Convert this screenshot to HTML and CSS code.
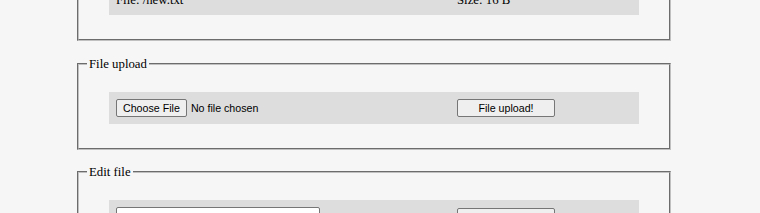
FILE: index.html
```html
<!DOCTYPE html>
<html lang="en">
<head>
    <meta charset="UTF-8">
    <meta name="viewport" content="width=device-width, initial-scale=1.0">
    <title>File manager</title>
    <link rel="stylesheet" href="styles.css">
</head>
<body>
    <div class="page">
        <fieldset class="panel">
            <legend>File info</legend>
            <div class="panel-row">
                <span>File: /new.txt</span>
                <span>Size: 16 B</span>
            </div>
        </fieldset>

        <fieldset class="panel">
            <legend>File upload</legend>
            <form class="panel-row" onsubmit="return false">
                <input type="file" class="file-pick">
                <input type="submit" class="btn" value="File upload!">
            </form>
        </fieldset>

        <fieldset class="panel">
            <legend>Edit file</legend>
            <form class="panel-row" onsubmit="return false">
                <input type="text" class="text-field" placeholder="Select file to edit">
                <input type="submit" class="btn" value="Edit">
            </form>
        </fieldset>
    </div>
</body>
</html>
```

FILE: styles.css
```css
html {
    background: #f6f6f6;
}

body {
    margin: 0;
    background: #f6f6f6;
    font-family: 'Liberation Serif', 'Times New Roman', serif;
    font-size: 12.8px;
    color: #000;
}

.page {
    width: 594px;
    margin: -50px 0 0 77px;
}

.panel {
    box-sizing: border-box;
    width: 100%;
    min-width: 0;
    margin: 0 0 14.5px;
    padding: 0 8px;
    border: 2px groove #c0c0c0;
}

.panel legend {
    padding: 0 2px;
    line-height: 16px;
}

.panel-row {
    display: grid;
    grid-template-columns: 341px 1fr;
    align-items: center;
    margin: 20px 22px 24px;
    padding: 7px;
    background: #dddddd;
}

.file-pick,
.btn,
.text-field {
    font-family: 'Liberation Sans', Arial, sans-serif;
    font-size: 10.67px;
    color: #000;
}

.file-pick {
    height: 18px;
}

.file-pick::file-selector-button {
    box-sizing: border-box;
    height: 18px;
    padding: 0 6px;
    margin-right: 4px;
    font-family: 'Liberation Sans', Arial, sans-serif;
    font-size: 10.67px;
    background: #efefef;
    border: 1px solid #767676;
    border-radius: 2px;
}

.btn {
    box-sizing: border-box;
    width: 98px;
    height: 18px;
    padding: 0 6px;
    background: #efefef;
    border: 1px solid #767676;
    border-radius: 2px;
}

.text-field {
    box-sizing: border-box;
    width: 204px;
    height: 20px;
    padding: 1px 2px;
    background: #fff;
    border: 1px solid #767676;
    border-radius: 2px;
}

.text-field::placeholder {
    color: #9a9a9a;
}
```
